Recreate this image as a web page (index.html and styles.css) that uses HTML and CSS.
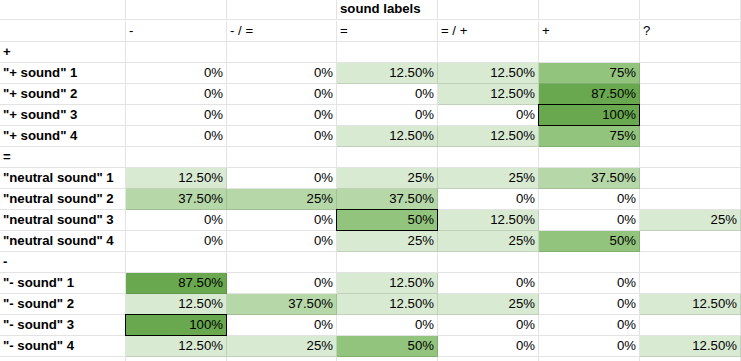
FILE: index.html
```html
<!DOCTYPE html>
<html>
<head>
<meta charset="utf-8">
<link rel="stylesheet" href="styles.css">
</head>
<body>
<div class="sheet">
  <div class="c top"></div><div class="c top"></div><div class="c top"></div><div class="c top b">sound labels</div><div class="c top"></div><div class="c top"></div><div class="c top"></div>

  <div class="c"></div><div class="c">-</div><div class="c">- / =</div><div class="c">=</div><div class="c">= / +</div><div class="c">+</div><div class="c">?</div>

  <div class="c b">+</div><div class="c"></div><div class="c"></div><div class="c"></div><div class="c"></div><div class="c"></div><div class="c"></div>

  <div class="c b">"+ sound" 1</div><div class="c n">0%</div><div class="c n">0%</div><div class="c n g1">12.50%</div><div class="c n g1">12.50%</div><div class="c n g3">75%</div><div class="c"></div>
  <div class="c b">"+ sound" 2</div><div class="c n">0%</div><div class="c n">0%</div><div class="c n">0%</div><div class="c n g1">12.50%</div><div class="c n g4">87.50%</div><div class="c"></div>
  <div class="c b">"+ sound" 3</div><div class="c n">0%</div><div class="c n">0%</div><div class="c n">0%</div><div class="c n">0%</div><div class="c n g4 sel">100%</div><div class="c"></div>
  <div class="c b">"+ sound" 4</div><div class="c n">0%</div><div class="c n">0%</div><div class="c n g1">12.50%</div><div class="c n g1">12.50%</div><div class="c n g3">75%</div><div class="c"></div>

  <div class="c b">=</div><div class="c"></div><div class="c"></div><div class="c"></div><div class="c"></div><div class="c"></div><div class="c"></div>

  <div class="c b">"neutral sound" 1</div><div class="c n g1">12.50%</div><div class="c n">0%</div><div class="c n g1">25%</div><div class="c n g1">25%</div><div class="c n g2">37.50%</div><div class="c"></div>
  <div class="c b">"neutral sound" 2</div><div class="c n g2">37.50%</div><div class="c n g2">25%</div><div class="c n g2">37.50%</div><div class="c n">0%</div><div class="c n">0%</div><div class="c"></div>
  <div class="c b">"neutral sound" 3</div><div class="c n">0%</div><div class="c n">0%</div><div class="c n g3 sel">50%</div><div class="c n g1">12.50%</div><div class="c n">0%</div><div class="c n g1">25%</div>
  <div class="c b">"neutral sound" 4</div><div class="c n">0%</div><div class="c n">0%</div><div class="c n g1">25%</div><div class="c n g1">25%</div><div class="c n g3">50%</div><div class="c"></div>

  <div class="c b">-</div><div class="c"></div><div class="c"></div><div class="c"></div><div class="c"></div><div class="c"></div><div class="c"></div>

  <div class="c b">"- sound" 1</div><div class="c n g4">87.50%</div><div class="c n">0%</div><div class="c n g1">12.50%</div><div class="c n">0%</div><div class="c n">0%</div><div class="c"></div>
  <div class="c b">"- sound" 2</div><div class="c n g1">12.50%</div><div class="c n g2">37.50%</div><div class="c n g1">12.50%</div><div class="c n g1">25%</div><div class="c n">0%</div><div class="c n g1">12.50%</div>
  <div class="c b">"- sound" 3</div><div class="c n g4 sel">100%</div><div class="c n">0%</div><div class="c n">0%</div><div class="c n">0%</div><div class="c n">0%</div><div class="c"></div>
  <div class="c b">"- sound" 4</div><div class="c n g1">12.50%</div><div class="c n g1">25%</div><div class="c n g3">50%</div><div class="c n">0%</div><div class="c n">0%</div><div class="c n g1">12.50%</div>

  <div class="c"></div><div class="c"></div><div class="c"></div><div class="c"></div><div class="c"></div><div class="c"></div><div class="c"></div>
</div>
</body>
</html>
```

FILE: styles.css
```css
html, body {
  margin: 0;
  padding: 0;
  background: #fff;
  overflow: hidden;
}

.sheet {
  display: grid;
  grid-template-columns: 126px 101px 110px 101px 101px 101px 101px;
  grid-auto-rows: 21px;
  font-family: "Liberation Sans", Arial, sans-serif;
  font-size: 13.2px;
  color: #000;
}

.c {
  box-sizing: border-box;
  border-right: 1px solid rgba(0, 0, 0, 0.11);
  border-bottom: 1px solid rgba(0, 0, 0, 0.11);
  padding: 0 3px;
  line-height: 20px;
  white-space: nowrap;
  overflow: hidden;
  position: relative;
}

.c.top {
  margin-top: -1px;
  height: 21px;
}

.b { font-weight: bold; }

.n { text-align: right; }

.g1 { background: #d9ead3; }
.g2 { background: #b6d7a8; }
.g3 { background: #93c47d; }
.g4 { background: #6aa84f; }

.sel { overflow: visible; z-index: 1; }
.sel::after {
  content: "";
  position: absolute;
  top: -1px;
  left: -1px;
  right: -1px;
  bottom: -1px;
  border: 1px solid #000;
  pointer-events: none;
}
```
